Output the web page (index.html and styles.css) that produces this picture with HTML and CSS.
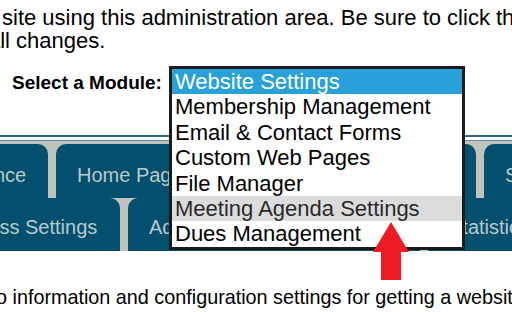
FILE: index.html
```html
<!DOCTYPE html>
<html lang="en">
<head>
    <meta charset="UTF-8">
    <meta name="viewport" content="width=device-width, initial-scale=1.0">
    <title>Administration Area</title>
    <link rel="stylesheet" href="styles.css">
</head>
<body>
    <div class="page">
        <p class="intro">
            <span class="intro-line">site using this administration area. Be sure to click the Save button to</span>
            <span class="intro-line intro-line--second">all changes.</span>
        </p>

        <div class="module-row">
            <label class="module-label">Select a Module:</label>
            <ul class="listbox">
                <li class="option option--selected">Website Settings</li>
                <li class="option">Membership Management</li>
                <li class="option">Email &amp; Contact Forms</li>
                <li class="option">Custom Web Pages</li>
                <li class="option">File Manager</li>
                <li class="option option--hover">Meeting Agenda Settings</li>
                <li class="option">Dues Management</li>
            </ul>
        </div>

        <div class="rule"></div>

        <nav class="tabs">
            <div class="tab-row tab-row--top">
                <a class="tab tab--finance">Finance</a>
                <a class="tab tab--home">Home Page</a>
                <a class="tab tab--support">Support</a>
            </div>
            <div class="tab-row tab-row--bottom">
                <a class="tab tab--access">Access Settings</a>
                <a class="tab tab--admin">Admin Users</a>
                <a class="tab tab--stats">Statistics</a>
            </div>
        </nav>

        <p class="desc">o information and configuration settings for getting a website up</p>

        <!-- callout arrow pointing at the option -->
        <svg class="arrow" width="40" height="60" viewBox="0 0 40 60">
            <polygon points="18,0 0,30 8,30 8,58 28,58 28,30 36,30" fill="#ed1c24"/>
        </svg>
    </div>
</body>
</html>
```

FILE: styles.css
```css
body {
    margin: 0;
    font-family: "Liberation Sans", Arial, sans-serif;
    color: #000;
    background: #fff;
}
.page {
    position: relative;
    width: 512px;
    height: 312px;
    overflow: hidden;
}
.intro {
    margin: 0;
    padding: 5.5px 0 0 2px;
    font-size: 22px;
    line-height: 23px;
    white-space: nowrap;
}
.intro-line {
    display: block;
}
.intro-line--second {
    margin-left: -14px;
}
.module-row {
    display: flex;
    height: 69px;
    margin-top: 14.5px;
}
.module-label {
    box-sizing: border-box;
    width: 169px;
    flex-shrink: 0;
    padding: 5.5px 0 0 12px;
    font-size: 19px;
    font-weight: bold;
}
.listbox {
    position: relative;
    z-index: 2;
    box-sizing: border-box;
    width: 296px;
    align-self: flex-start;
    margin: 0;
    padding: 0;
    list-style: none;
    background: #fff;
    border: 3px solid #1b1b1b;
    font-size: 22px;
    line-height: 25.4px;
}
.option {
    padding-left: 3px;
    white-space: nowrap;
}
.option--selected {
    background: #28a0da;
    color: #fff;
}
.option--hover {
    background: #dcdcdc;
    color: #2a2a2a;
}
.rule {
    height: 3px;
    border-top: 2px solid #2b6783;
    border-bottom: 1px solid #5d8ea3;
}
.tabs {
    padding-top: 3px;
    background: #c1c4bc;
    overflow: hidden;
}
.tab-row {
    display: flex;
    gap: 8px;
    margin-left: -66px;
}
.tab-row--top .tab {
    height: 54px;
    padding-top: 19.5px;
}
.tab-row--bottom .tab {
    height: 53px;
    padding-top: 17.5px;
}
.tab {
    box-sizing: border-box;
    flex-shrink: 0;
    padding-left: 21px;
    background: #02506d;
    border-radius: 10px 10px 0 0;
    color: #bac7cb;
    font-size: 20px;
    line-height: 23px;
    white-space: nowrap;
}
.tab--finance { width: 114px; }
.tab--home { width: 420px; }
.tab--support { width: 120px; }
.tab--access { width: 186px; }
.tab--admin { width: 292px; }
.tab--stats { width: 140px; }
.desc {
    margin: 34.5px 0 0 -4px;
    font-size: 19.8px;
    white-space: nowrap;
}
.arrow {
    position: absolute;
    z-index: 3;
    left: 373px;
    top: 222px;
}
```
